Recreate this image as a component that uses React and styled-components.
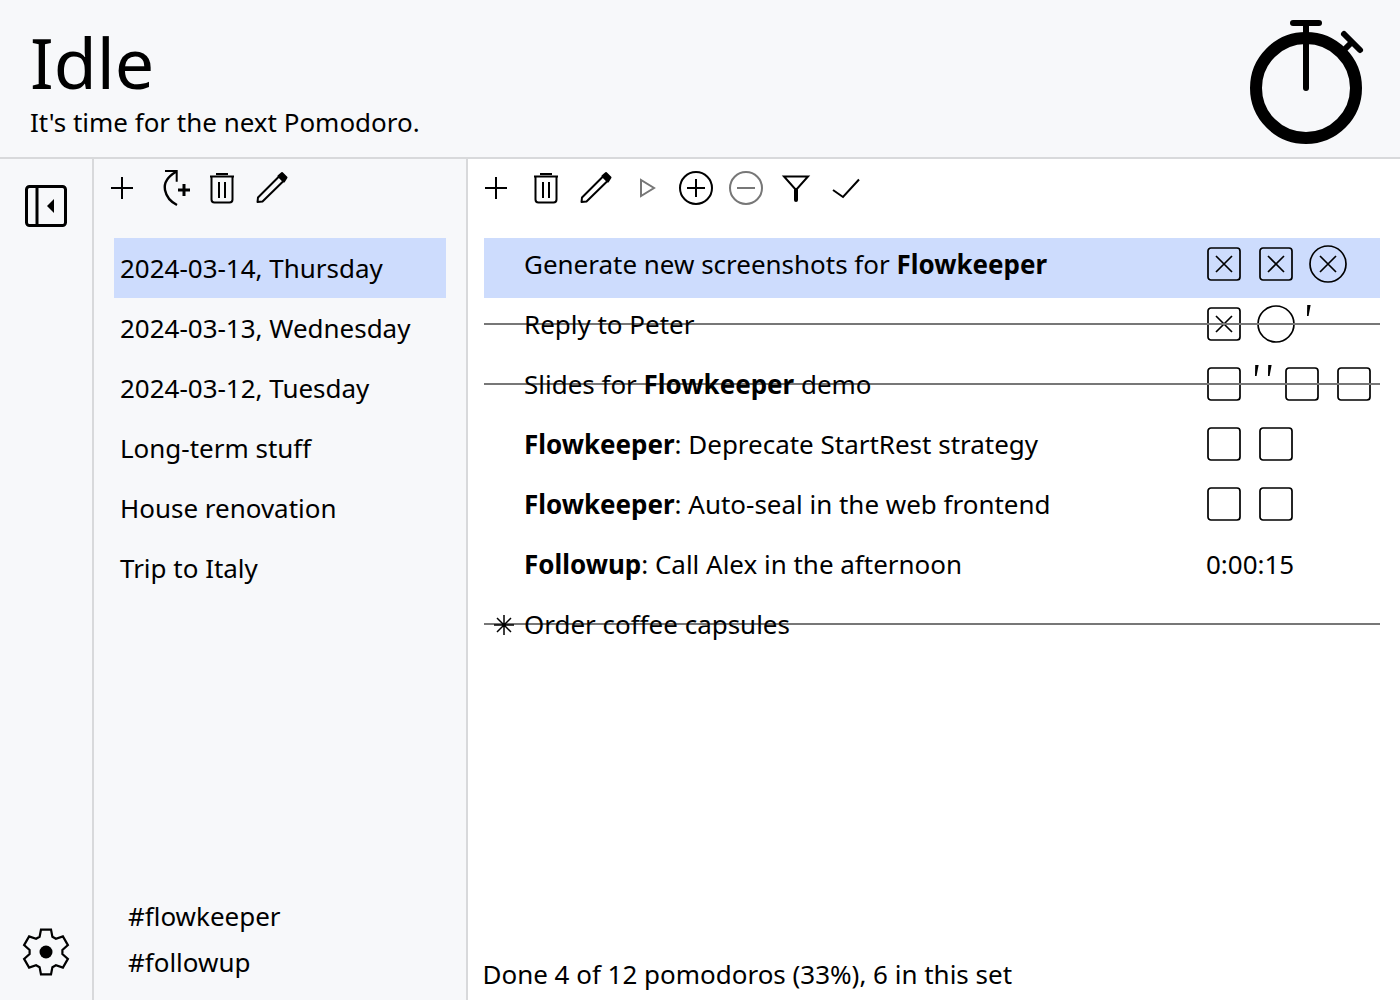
import React from "react";
import styled, { createGlobalStyle } from "styled-components";

const GlobalStyle = createGlobalStyle`
  html, body {
    margin: 0;
    padding: 0;
    background: #f7f8fa;
  }
  * { box-sizing: border-box; }
`;

const Page = styled.div`
  width: 1400px;
  height: 1000px;
  overflow: hidden;
  display: flex;
  flex-direction: column;
  font-family: "Noto Sans", sans-serif;
  color: #000;
  background: #f7f8fa;
`;

const Header = styled.header`
  height: 159px;
  flex-shrink: 0;
  display: flex;
  justify-content: space-between;
  padding: 18px 36px 0 30px;
  border-bottom: 2px solid #d8d9db;
`;

const Status = styled.div`
  display: flex;
  flex-direction: column;
`;

const Title = styled.h1`
  margin: 0;
  font-size: 70px;
  font-weight: 400;
  line-height: 92px;
  margin-top: -2px;
`;

const Subtitle = styled.div`
  font-size: 25.97px;
  line-height: 28px;
`;

const Body = styled.div`
  flex: 1;
  display: flex;
  min-height: 0;
`;

const Rail = styled.nav`
  width: 94px;
  flex-shrink: 0;
  display: flex;
  flex-direction: column;
  align-items: center;
  justify-content: space-between;
  padding: 25px 0 24px 0;
  border-right: 2px solid #d8d9db;
`;

const LeftPanel = styled.aside`
  width: 374px;
  flex-shrink: 0;
  display: flex;
  flex-direction: column;
  padding: 4px 20px 0 3px;
  border-right: 2px solid #d8d9db;
`;

const MainPanel = styled.main`
  flex: 1;
  display: flex;
  flex-direction: column;
  padding: 4px 20px 0 3px;
  background: #fff;
`;

const Toolbar = styled.div`
  display: flex;
  height: 50px;
  align-items: center;
  margin-bottom: 25px;
`;

const ToolButton = styled.button`
  width: 50px;
  height: 50px;
  padding: 0;
  border: 0;
  background: none;
  display: flex;
  align-items: center;
  justify-content: center;
`;

const BacklogList = styled.ul`
  list-style: none;
  margin: 0 0 0 17px;
  padding: 0;
`;

const BacklogItem = styled.li`
  height: 60px;
  display: flex;
  align-items: center;
  padding-left: 6px;
  font-size: 25.97px;
  background: ${(p) => (p.$selected ? "#cddcfd" : "transparent")};
`;

const Tags = styled.div`
  margin-top: auto;
  padding: 0 0 15px 31px;
  display: flex;
  flex-direction: column;
`;

const Tag = styled.div`
  height: 46px;
  display: flex;
  align-items: center;
  font-size: 25.97px;
`;

const TaskList = styled.ul`
  list-style: none;
  margin: 0 0 0 13px;
  padding: 0;
`;

const TaskRow = styled.li`
  position: relative;
  height: 60px;
  padding: 0 0 8px 40px;
  display: flex;
  align-items: center;
  font-size: 25.97px;
  background: ${(p) => (p.$selected ? "#cddcfd" : "transparent")};

  ${(p) =>
    p.$struck &&
    `&::after {
      content: "";
      position: absolute;
      left: 0;
      right: 0;
      top: 25px;
      height: 2px;
      background: #777;
    }`}
`;

// text sits on top of the strike-out line
const TaskTitle = styled.div`
  position: relative;
  z-index: 1;
  width: 674px;
  flex-shrink: 0;
  white-space: pre;
`;

const Marks = styled.div`
  display: flex;
  align-items: center;
  height: 52px;
`;

const MarkCell = styled.div`
  width: ${(p) => (p.$tick ? 13 : 52)}px;
  height: 52px;
  display: flex;
  align-items: center;
  justify-content: center;
`;

const Elapsed = styled.div`
  margin-left: 8px;
`;

const Summary = styled.div`
  margin-top: auto;
  height: 50px;
  padding: 0 0 2px 11.5px;
  display: flex;
  align-items: center;
  font-size: 25.97px;
`;

const Stroke = styled.svg`
  display: block;
  flex-shrink: 0;
  fill: none;
  stroke: ${(p) => p.$color || "#000"};
  stroke-width: ${(p) => p.$weight || 2};
  overflow: visible;
`;

const TaskStar = styled(Stroke)`
  position: absolute;
  left: 10px;
  top: 17px;
  z-index: 1;
`;

const TickMark = styled(Stroke)`
  margin: -28px 2px 0 0;
`;

const Icon = ({ children, color }) => (
  <Stroke width="36" height="36" viewBox="0 0 36 36" $color={color}>
    {children}
  </Stroke>
);

const PlusIcon = () => (
  <Icon>
    <path d="M7 18H29M18 7V29" />
  </Icon>
);

const TrashIcon = () => (
  <Icon>
    <path d="M6 6.5H30M12 4H24" />
    <path d="M7.5 7V29.5Q7.5 32.5 10.5 32.5H25.5Q28.5 32.5 28.5 29.5V7" />
    <path d="M15 12V28M21 12V28" />
  </Icon>
);

const PencilIcon = () => (
  <Icon>
    <path d="M3.5 32L4 27.5L25 6.5L29.5 11L8.5 31.5Z" strokeLinejoin="round" />
    <path d="M24.5 6L28 3L32.5 7.5L30 11.5Z" fill="#000" strokeLinejoin="round" />
  </Icon>
);

const CarryIcon = () => (
  <Icon>
    <path d="M11 1H22.7V11.7" />
    <path d="M22.7 1.5Q9 9 11 20Q13 30 23 35" strokeWidth="2.4" />
    <path d="M24 20H36M30 14V26" strokeWidth="3" />
  </Icon>
);

const PlayIcon = () => (
  <Icon color="#777">
    <path d="M13 10V26L26 18Z" />
  </Icon>
);

const AddPomodoroIcon = () => (
  <Icon>
    <circle cx="18" cy="18" r="16" />
    <path d="M9 18H27M18 9V27" />
  </Icon>
);

const RemovePomodoroIcon = () => (
  <Icon color="#777">
    <circle cx="18" cy="18" r="16" />
    <path d="M9 18H27" />
  </Icon>
);

const FilterIcon = () => (
  <Icon>
    <path d="M6 6.5H30L18 20Z" />
    <path d="M18 20V30" strokeWidth="4" strokeLinecap="round" />
  </Icon>
);

const CheckIcon = () => (
  <Icon>
    <path d="M5 20L15 27L31 9.5" />
  </Icon>
);

const PanelIcon = () => (
  <Stroke width="44" height="44" viewBox="0 0 44 44" $weight={3}>
    <rect x="2.5" y="2.5" width="39" height="39" rx="3" />
    <path d="M13 2.5V41.5" />
    <path d="M30 15V29L23 22Z" fill="#000" stroke="none" />
  </Stroke>
);

// six teeth, one pointing straight up
const gearPath = (() => {
  const cx = 24;
  const cy = 24;
  const pts = [];
  for (let i = 0; i < 6; i++) {
    const a = (i * Math.PI) / 3 - Math.PI / 2;
    const polar = (r, d) => [cx + r * Math.cos(a + d), cy + r * Math.sin(a + d)];
    pts.push(polar(16.5, -0.4), polar(23, -0.22), polar(23, 0.22), polar(16.5, 0.4));
  }
  return "M" + pts.map((p) => p.map((n) => n.toFixed(1)).join(" ")).join("L") + "Z";
})();

const GearIcon = () => (
  <Stroke width="48" height="48" viewBox="0 0 48 48" $weight={2.2}>
    <path d={gearPath} strokeLinejoin="miter" />
    <circle cx="24" cy="24" r="6.5" fill="#000" stroke="none" />
  </Stroke>
);

const TimerIcon = () => (
  <Stroke width="116" height="128" viewBox="0 0 116 128">
    <circle cx="58" cy="70" r="50" strokeWidth="12" />
    <path d="M58 5V70" strokeWidth="6" strokeLinecap="round" />
    <path d="M45 5H71" strokeWidth="6" strokeLinecap="round" />
    <path d="M96 16L112 32" strokeWidth="6" strokeLinecap="round" />
    <path d="M104 24L94 34" strokeWidth="6" />
  </Stroke>
);

const Mark = ({ kind }) => {
  if (kind === "tick") {
    return (
      <MarkCell $tick>
        <TickMark width="6" height="11" viewBox="0 0 6 11">
          <path d="M2.2 0H5.6L3.6 11H2Z" fill="#000" stroke="none" />
        </TickMark>
      </MarkCell>
    );
  }
  if (kind === "done" || kind === "box") {
    return (
      <MarkCell>
        <Stroke width="34" height="34" viewBox="0 0 34 34" $weight={1.7}>
          <rect x="1" y="1" width="32" height="32" rx="3" />
          {kind === "done" && <path d="M9 9L25 25M25 9L9 25" />}
        </Stroke>
      </MarkCell>
    );
  }
  return (
    <MarkCell>
      <Stroke width="38" height="38" viewBox="0 0 38 38" $weight={1.7}>
        <circle cx="19" cy="19" r="18" />
        {kind === "doneRound" && <path d="M11 11L27 27M27 11L11 27" />}
      </Stroke>
    </MarkCell>
  );
};

const backlogs = [
  "2024-03-14, Thursday",
  "2024-03-13, Wednesday",
  "2024-03-12, Tuesday",
  "Long-term stuff",
  "House renovation",
  "Trip to Italy",
];

const tasks = [
  {
    title: (
      <>
        Generate new screenshots for <b>Flowkeeper</b>
      </>
    ),
    marks: ["done", "done", "doneRound"],
    selected: true,
  },
  { title: "Reply to Peter", marks: ["done", "round", "tick"], struck: true },
  {
    title: (
      <>
        Slides for <b>Flowkeeper</b> demo
      </>
    ),
    marks: ["box", "tick", "tick", "box", "box"],
    struck: true,
  },
  {
    title: (
      <>
        <b>Flowkeeper</b>: Deprecate StartRest strategy
      </>
    ),
    marks: ["box", "box"],
  },
  {
    title: (
      <>
        <b>Flowkeeper</b>: Auto-seal in the web frontend
      </>
    ),
    marks: ["box", "box"],
  },
  {
    title: (
      <>
        <b>Followup</b>: Call Alex in the afternoon
      </>
    ),
    elapsed: "0:00:15",
  },
  { title: "Order coffee capsules", struck: true, star: true },
];

export default function App() {
  return (
    <Page>
      <GlobalStyle />
      <Header>
        <Status>
          <Title>Idle</Title>
          <Subtitle>It's time for the next Pomodoro.</Subtitle>
        </Status>
        <TimerIcon />
      </Header>
      <Body>
        <Rail>
          <PanelIcon />
          <GearIcon />
        </Rail>
        <LeftPanel>
          <Toolbar>
            <ToolButton><PlusIcon /></ToolButton>
            <ToolButton><CarryIcon /></ToolButton>
            <ToolButton><TrashIcon /></ToolButton>
            <ToolButton><PencilIcon /></ToolButton>
          </Toolbar>
          <BacklogList>
            {backlogs.map((name, i) => (
              <BacklogItem key={name} $selected={i === 0}>{name}</BacklogItem>
            ))}
          </BacklogList>
          <Tags>
            <Tag>#flowkeeper</Tag>
            <Tag>#followup</Tag>
          </Tags>
        </LeftPanel>
        <MainPanel>
          <Toolbar>
            <ToolButton><PlusIcon /></ToolButton>
            <ToolButton><TrashIcon /></ToolButton>
            <ToolButton><PencilIcon /></ToolButton>
            <ToolButton><PlayIcon /></ToolButton>
            <ToolButton><AddPomodoroIcon /></ToolButton>
            <ToolButton><RemovePomodoroIcon /></ToolButton>
            <ToolButton><FilterIcon /></ToolButton>
            <ToolButton><CheckIcon /></ToolButton>
          </Toolbar>
          <TaskList>
            {tasks.map((task, i) => (
              <TaskRow key={i} $selected={task.selected} $struck={task.struck}>
                {task.star && (
                  <TaskStar width="20" height="20" viewBox="0 0 20 20" $weight={1.5}>
                    <path d="M10 0V20M0 10H20M3 3L17 17M17 3L3 17" />
                  </TaskStar>
                )}
                <TaskTitle>{task.title}</TaskTitle>
                {task.marks && (
                  <Marks>
                    {task.marks.map((kind, j) => (
                      <Mark key={j} kind={kind} />
                    ))}
                  </Marks>
                )}
                {task.elapsed && <Elapsed>{task.elapsed}</Elapsed>}
              </TaskRow>
            ))}
          </TaskList>
          <Summary>Done 4 of 12 pomodoros (33%), 6 in this set</Summary>
        </MainPanel>
      </Body>
    </Page>
  );
}
